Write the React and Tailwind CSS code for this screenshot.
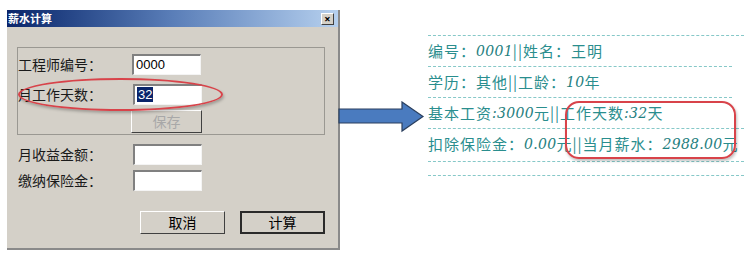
import React from 'react';

const cjk = { fontFamily: '"SimSun", "Noto Sans CJK SC", sans-serif' };

function Field({ value, selected }) {
    return (
        <div className="w-[69px] h-[21px] bg-white border-t-2 border-l-2 border-t-[#808080] border-l-[#808080] border-r border-b border-r-[#f4f4f4] border-b-[#f4f4f4] flex items-center px-[2px]">
            {selected ? (
                <span className="bg-[#0a246a] text-white text-[13px] leading-[15px] px-[1px]" style={{ fontFamily: '"Liberation Sans", sans-serif' }}>{value}</span>
            ) : (
                <span className="text-black text-[13px] leading-[15px]" style={{ fontFamily: '"Liberation Sans", sans-serif' }}>{value}</span>
            )}
        </div>
    );
}

function Btn({ label, isDefault, disabled, w = 'w-[85px]' }) {
    return (
        <div
            className={`${w} h-[23px] flex items-center justify-center text-[14px] border ${isDefault ? 'border-[#2a2a2a] border-2' : 'border-t-white border-l-white border-r-[#404040] border-b-[#404040]'} ${disabled ? 'text-[#a8a8a8]' : 'text-black'}`}
            style={cjk}
        >
            {label}
        </div>
    );
}

function Dialog() {
    return (
        <div className="shrink-0 ml-[7px] mt-[10px] w-[333px] h-[240px] bg-[#d4d0c8] border-r-2 border-b-2 border-r-[#8a8a8a] border-b-[#8a8a8a] flex flex-col">
            <div className="h-[17px] bg-gradient-to-r from-[#0a246a] via-[#5a7eb8] to-[#b6d0ee] flex items-center justify-between pl-[1px] pr-[4px]">
                <span className="text-white text-[11px] font-bold leading-none" style={cjk}>薪水计算</span>
                <div className="w-[13px] h-[12px] bg-[#d4d0c8] border border-t-white border-l-white border-r-[#404040] border-b-[#404040] flex items-center justify-center text-[11px] font-bold leading-none text-black">×</div>
            </div>
            <div className="pl-[10px] pt-[20px]">
                <div className="w-[308px] h-[88px] border border-[#9a9892] flex flex-col pt-[5px]">
                    <div className="flex items-center h-[22px]">
                        <span className="w-[114px] text-[14px] text-[#1a1a1a]" style={cjk}>工程师编号：</span>
                        <Field value="0000" />
                    </div>
                    <div className="flex items-center h-[22px] mt-[8px]">
                        <span className="w-[115px] text-[14px] text-[#1a1a1a]" style={cjk}>月工作天数：</span>
                        <Field value="32" selected />
                    </div>
                    <div className="ml-[113px] mt-[5px]">
                        <Btn label="保存" disabled w="w-[71px]" />
                    </div>
                </div>
                <div className="flex items-center h-[22px] mt-[8px] pl-[1px]">
                    <span className="w-[115px] text-[14px] text-[#1a1a1a]" style={cjk}>月收益金额：</span>
                    <Field value="" />
                </div>
                <div className="flex items-center h-[22px] mt-[4px] pl-[1px]">
                    <span className="w-[115px] text-[14px] text-[#1a1a1a]" style={cjk}>缴纳保险金：</span>
                    <Field value="" />
                </div>
                <div className="flex gap-[15px] ml-[123px] mt-[20px]">
                    <Btn label="取消" />
                    <Btn label="计算" isDefault />
                </div>
            </div>
        </div>
    );
}

function Arrow() {
    return (
        <svg width="88" height="32" viewBox="0 0 88 32" className="shrink-0 mt-[101px] -ml-[3px]">
            <polygon points="2,8 65,8 65,1 86,15.5 65,30 65,22 2,22" fill="#4a7bbf" stroke="#2a3f5e" strokeWidth="1.2" />
        </svg>
    );
}

const num = { fontFamily: '"DejaVu Serif", serif', fontStyle: 'italic', fontWeight: 500, letterSpacing: '0.3px' };

function Dash({ full }) {
    return <div className={`border-t border-dashed border-[#86c8c8] ${full ? 'w-[316px]' : 'w-[304px]'}`} />;
}

function Row({ children }) {
    return (
        <div className="h-[30px] flex items-center text-[15px] text-[#2a8e8e] tracking-[1px] whitespace-nowrap" style={cjk}>
            {children}
        </div>
    );
}

function N({ children }) {
    return <span className="text-[14px] text-[#1f8080]" style={num}>{children}</span>;
}

function Report() {
    return (
        <div className="shrink-0 w-[316px] ml-[3px] mt-[35px] flex flex-col">
            <Dash full />
            <Row>编号：<N>0001</N>||姓名：王明</Row>
            <Dash />
            <Row>学历：其他||工龄：<N>10</N>年</Row>
            <Dash />
            <Row>基本工资<N>:3000</N>元||工作天数<N>:32</N>天</Row>
            <Dash full />
            <Row>扣除保险金：<N>0.00</N>元||当月薪水：<N>2988.00</N>元</Row>
            <div className="mt-[2px]"><Dash full /></div>
            <div className="mt-[13px]"><Dash full /></div>
        </div>
    );
}

export default function App() {
    return (
        <div className="relative w-[744px] h-[259px] bg-white flex overflow-hidden">
            <Dialog />
            <Arrow />
            <Report />
            <div className="absolute left-[18px] top-[78px] w-[205px] h-[33px] rounded-[50%] border-2 border-[#d8434a] shadow-[1px_2px_3px_rgba(0,0,0,0.25)]" />
            <div className="absolute left-[565px] top-[101px] w-[171px] h-[58px] rounded-[14px] border-2 border-[#d8434a] shadow-[1px_2px_3px_rgba(0,0,0,0.25)]" />
        </div>
    );
}
